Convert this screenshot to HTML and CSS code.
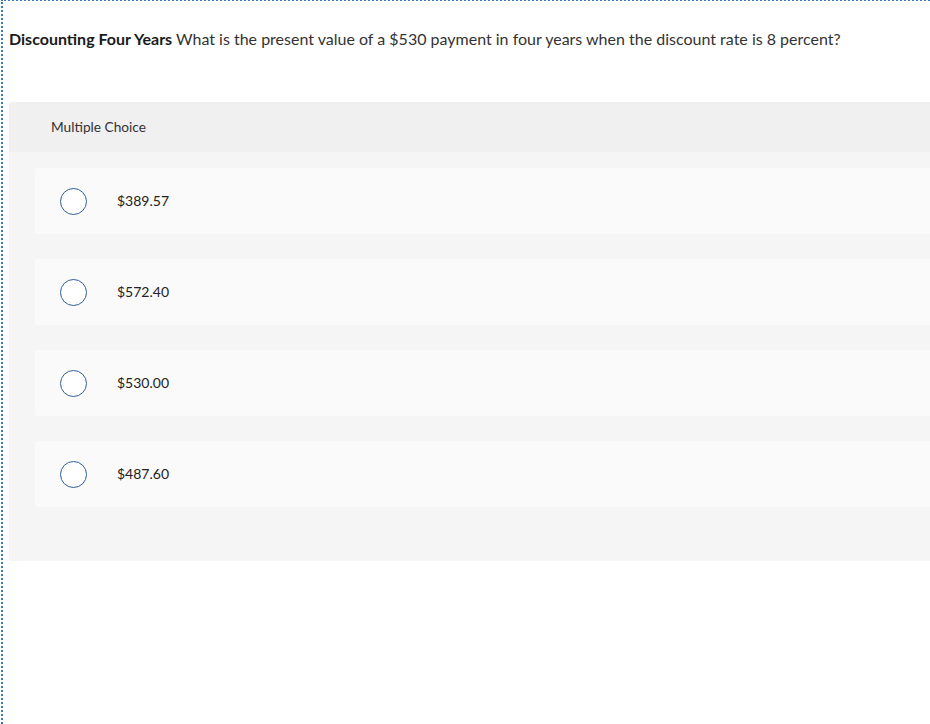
FILE: index.html
```html
<!DOCTYPE html>
<html>
<head>
<meta charset="utf-8">
<link rel="stylesheet" href="styles.css">
</head>
<body>
<div class="frame">
  <p class="question"><strong>Discounting Four Years</strong> What is the present value of a $530 payment in four years when the discount rate is 8 percent?</p>
  <div class="panel">
    <div class="panel-head">Multiple Choice</div>
    <div class="panel-body">
      <div class="option"><span class="radio"></span><span class="label">$389.57</span></div>
      <div class="option"><span class="radio"></span><span class="label">$572.40</span></div>
      <div class="option"><span class="radio"></span><span class="label">$530.00</span></div>
      <div class="option"><span class="radio"></span><span class="label">$487.60</span></div>
    </div>
  </div>
</div>
</body>
</html>
```

FILE: styles.css
```css
html, body {
  margin: 0;
  padding: 0;
  overflow: hidden;
  background: #fff;
}
body {
  font-family: Lato, "Liberation Sans", sans-serif;
  color: #333;
}
.frame {
  margin: -1px 0 0 1px;
  border-top: 2px dotted #3a78c2;
  border-left: 2px dotted #3a78c2;
  height: 760px;
  box-sizing: border-box;
  padding-left: 6px;
}
.question {
  margin: 0;
  padding-top: 28px;
  font-size: 16px;
  line-height: 20px;
  color: #333;
}
.question strong {
  color: #1a1a1a;
  font-weight: 700;
}
.panel {
  margin-top: 53px;
  border-radius: 3px 0 0 3px;
  overflow: hidden;
}
.panel-head {
  background: #f0f0f0;
  height: 50px;
  box-sizing: border-box;
  padding-bottom: 2px;
  display: flex;
  align-items: center;
  padding-left: 42px;
  font-size: 13.7px;
  color: #333;
}
.panel-body {
  background: #f5f5f5;
  padding: 16px 0 54px 26px;
  display: flex;
  flex-direction: column;
  gap: 25px;
}
.option {
  background: #fafafa;
  height: 66px;
  border-radius: 3px 0 0 3px;
  display: flex;
  align-items: center;
  padding-left: 25px;
}
.radio {
  width: 25px;
  height: 25px;
  border: 1.5px solid #2f5f94;
  border-radius: 50%;
  background: #fff;
  flex: none;
}
.label {
  margin-left: 30px;
  padding-bottom: 2px;
  font-size: 14px;
  color: #222;
}
```
